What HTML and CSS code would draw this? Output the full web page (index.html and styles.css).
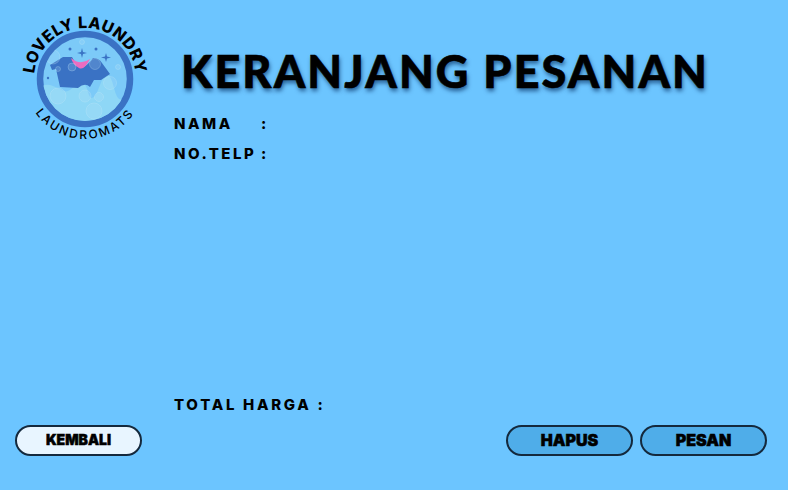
FILE: index.html
```html
<!DOCTYPE html>
<html lang="id">
<head>
<meta charset="utf-8">
<title>Keranjang Pesanan</title>
<link rel="stylesheet" href="styles.css">
</head>
<body>
<div class="page">
  <div class="top">
    <svg class="logo" viewBox="0 0 150 150" width="150" height="150" aria-label="Lovely Laundry Laundromats">
      <defs>
        <clipPath id="disc"><circle cx="75" cy="74" r="42"/></clipPath>
        <path id="arcTop" d="M25 84 A51 51 0 1 1 125 84" />
        <path id="arcBottom" d="M15 74 A60 60 0 0 0 135 74" />
      </defs>
      <circle cx="75" cy="74" r="45" fill="#7ccaf8" stroke="#3a72c4" stroke-width="6.500"/>
      <g clip-path="url(#disc)">
        <path d="M30 82 Q36 78 43 81 T54 86 T66 80 T78 87 T90 80 T104 83 T122 79 V120 H30Z" fill="#8ed7f6"/>
        <path d="M40 60 L53 52 L62 52 Q66 60 72 63 Q78 60 83 53 Q89 53 92 58 L100 69 L91 75 L84 75 L80 82 Q75 77 68 83 L50 82 L46 64 L42 65Z" fill="#3a72c4"/>
        <path d="M61 53 Q70 61 80 54 Q74 66 69 63 Q63 60 61 53Z" fill="#ec6cc0"/>
        <g fill="#bde6fb" fill-opacity=".18" stroke="#cdeefd" stroke-opacity=".5" stroke-width=".5">
          <circle cx="43" cy="52" r="7"/>
          <circle cx="62" cy="62" r="4"/>
          <circle cx="85" cy="59" r="5.500"/>
          <circle cx="100" cy="78" r="6.500"/>
          <circle cx="48" cy="91" r="8"/>
          <circle cx="75" cy="91" r="6"/>
          <circle cx="89" cy="92" r="4.500"/>
          <circle cx="84" cy="106" r="8"/>
          <circle cx="108" cy="62" r="2.500"/>
          <circle cx="72" cy="37" r="2.500"/>
          <circle cx="48" cy="64" r="2.500"/>
        </g>
        <g fill="#3a72c4">
          <path d="M72 43 L73 47 L77 48 L73 49 L72 53 L71 49 L67 48 L71 47Z"/>
          <path d="M96 48 L97 51.500 L101 52.500 L97 53.500 L96 57 L95 53.500 L91 52.500 L95 51.500Z"/>
          <circle cx="60" cy="44" r="1.500"/>
          <circle cx="86" cy="44" r="1.500"/>
          <circle cx="38" cy="73" r="1.200"/>
        </g>
      </g>
      <text class="logo-name"><textPath href="#arcTop" startOffset="50%">LOVELY LAUNDRY</textPath></text>
      <text class="logo-sub"><textPath href="#arcBottom" startOffset="50%">LAUNDROMATS</textPath></text>
    </svg>
    <main class="main">
      <h1 class="title">KERANJANG PESANAN</h1>
      <div class="fields">
        <div class="field"><span class="field-name">NAMA</span><span>:</span></div>
        <div class="field"><span class="field-name">NO.TELP</span><span>:</span></div>
      </div>
      <div class="total">TOTAL HARGA :</div>
    </main>
  </div>
  <div class="actions">
    <button class="btn btn-light">KEMBALI</button>
    <div class="actions-right">
      <button class="btn">HAPUS</button>
      <button class="btn">PESAN</button>
    </div>
  </div>
</div>
</body>
</html>
```
FILE: styles.css
```css
* { box-sizing: border-box; }
html, body { margin: 0; height: 100%; }
body { background: #6cc5ff; color: #000; font-family: "Inter", "Liberation Sans", sans-serif; }
.page { width: 788px; height: 490px; display: flex; flex-direction: column; overflow: hidden; }
.top { flex: 1; display: flex; align-items: flex-start; }
.logo { flex: none; margin: 5px 14px 0 10px; display: block; }
.logo-name { font: 800 16px "Inter", sans-serif; text-anchor: middle; fill: #000; letter-spacing: .4px; }
.logo-sub { font: 500 12px "Inter", sans-serif; text-anchor: middle; fill: #000; letter-spacing: 2.200px; }
.main { flex: 1; height: 420px; display: flex; flex-direction: column; }
.title { margin: 42px 0 0 7px; font-family: "Lato", sans-serif; font-size: 45px; line-height: 58px; font-weight: 900; letter-spacing: 2.100px; white-space: nowrap; -webkit-text-stroke: .6px #000; text-shadow: 1px 3px 4px rgba(0, 40, 90, .65); }
.fields { margin-top: 15px; display: flex; flex-direction: column; gap: 12px; }
.field { display: flex; font-size: 15px; line-height: 18px; font-weight: 800; letter-spacing: 2.500px; }
.field-name { width: 87px; }
.total { margin-top: auto; margin-bottom: 6px; font-size: 15px; line-height: 18px; font-weight: 800; letter-spacing: 2.700px; }
.actions { display: flex; justify-content: space-between; padding: 0 21px 34px 15px; }
.actions-right { display: flex; gap: 7px; }
.btn { width: 127px; height: 31px; padding: 0 0 1px; border: 2px solid #14293d; border-radius: 16px; background: #4fade9; color: #000; font-family: "Inter", sans-serif; font-size: 16px; font-weight: 900; -webkit-text-stroke: .5px #000; }
.btn-light { padding-bottom: 3px; background: #e8f5ff; font-size: 14px; }
```
